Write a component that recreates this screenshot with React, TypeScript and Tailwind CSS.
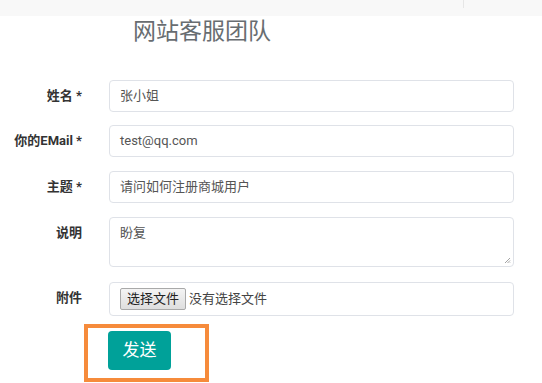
import React from "react";

const font = "font-['Roboto','Noto_Sans_CJK_SC',sans-serif]";

function Label({ children, top }: { children: React.ReactNode; top?: boolean }) {
  return (
    <div
      className={`w-[82px] shrink-0 text-right text-[13px] font-bold text-[#333] ${top ? "pt-[6px] self-start" : ""}`}
    >
      {children}
    </div>
  );
}

export default function App() {
  return (
    <div className={`relative w-[542px] h-[383px] bg-white overflow-hidden ${font}`}>
      <div className="h-[16px] bg-[#f8f8f8] relative">
        <div className="absolute left-[463px] top-0 w-px h-[8px] bg-[#e6e6e6]" />
      </div>
      <div className="pl-[133px] text-[23px] leading-[26px] text-[#686d71] font-['Noto_Sans_CJK_SC',sans-serif]">
        网站客服团队
      </div>
      <div className="mt-[38px] flex flex-col">
        <div className="flex items-center h-[32px]">
          <Label>姓名 *</Label>
          <div className="ml-[27px] w-[405px] h-[32px] border border-[#dfe2e8] rounded-[4px] flex items-center pl-[10px] text-[13px] text-[#555]">
            张小姐
          </div>
        </div>
        <div className="flex items-center h-[32px] mt-[13px]">
          <Label>你的EMail *</Label>
          <div className="ml-[27px] w-[405px] h-[32px] border border-[#dfe2e8] rounded-[4px] flex items-center pl-[10px] text-[13px] text-[#555]">
            test@qq.com
          </div>
        </div>
        <div className="flex items-center h-[32px] mt-[14px]">
          <Label>主题 *</Label>
          <div className="ml-[27px] w-[405px] h-[32px] border border-[#dfe2e8] rounded-[4px] flex items-center pl-[10px] text-[13px] text-[#555]">
            请问如何注册商城用户
          </div>
        </div>
        <div className="flex h-[50px] mt-[14px]">
          <Label top>说明</Label>
          <div className="relative ml-[27px] w-[405px] h-[50px] border border-[#dfe2e8] rounded-[4px] pl-[10px] pt-[5px] text-[13px] text-[#555]">
            盼复
            <svg className="absolute right-[2px] bottom-[2px]" width="7" height="7" viewBox="0 0 7 7">
              <path d="M6 1 L1 6 M6 3.5 L3.5 6 M6 5.5 L5.5 6" stroke="#999" strokeWidth="0.9" />
            </svg>
          </div>
        </div>
        <div className="flex items-center h-[34px] mt-[15px]">
          <Label top>附件</Label>
          <div className="ml-[27px] w-[405px] h-[34px] border border-[#dfe2e8] rounded-[4px] flex items-center pl-[10px] text-[13px] text-[#555]">
            <span className="h-[22px] px-[6px] flex items-center border border-[#a9a9a9] rounded-[2px] bg-gradient-to-b from-[#f4f4f4] to-[#dedede] text-[#222]">
              选择文件
            </span>
            <span className="ml-[3px] text-[#444]">没有选择文件</span>
          </div>
        </div>
        <div className="ml-[84px] mt-[8px] w-[125px] h-[58px] border-[4px] border-[#f68b3b] pl-[20px] pt-[3px]">
          <div className="w-[63px] h-[39px] rounded-[4px] bg-[#00a199] text-white text-[17px] flex items-center justify-center">
            发送
          </div>
        </div>
      </div>
    </div>
  );
}
